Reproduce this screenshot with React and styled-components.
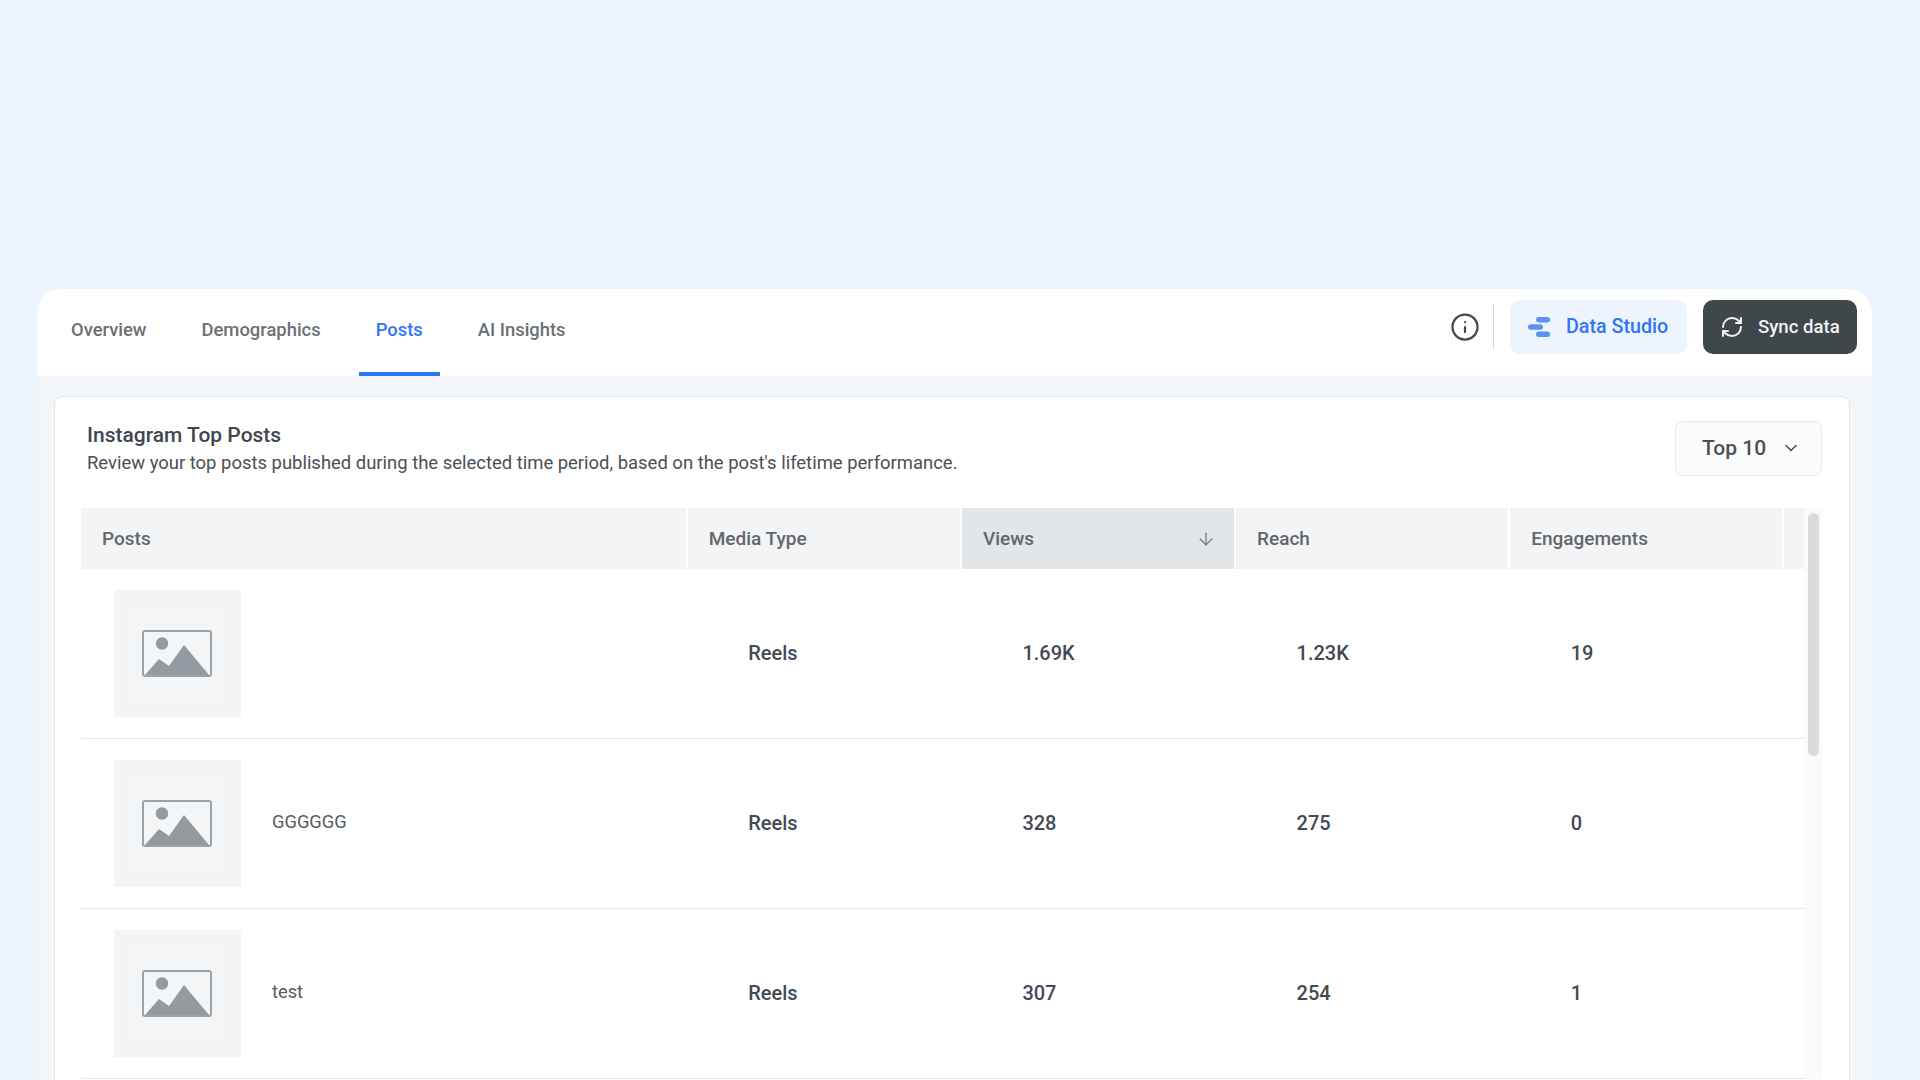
import React from 'react';
import styled, { createGlobalStyle } from 'styled-components';
import { ArrowDown, ChevronDown, Info, RefreshCw } from 'lucide-react';

const GlobalStyle = createGlobalStyle`
  html, body {
    margin: 0;
    height: 100%;
    overflow: hidden;
    background: #ecf4fe;
    font-family: Roboto, 'Liberation Sans', sans-serif;
  }
`;

const Page = styled.div`
  height: 1080px;
  padding: 289px 48px 0 37px;
  box-sizing: border-box;
  overflow: hidden;
`;

const Panel = styled.div`
  background: #f2f5f9;
  border-radius: 24px 24px 0 0;
  overflow: hidden;
  height: 100%;
`;

const TabBar = styled.div`
  height: 87px;
  background: #fff;
  display: flex;
  align-items: flex-start;
  justify-content: space-between;
  padding: 0 15px 0 17px;
`;

const Tabs = styled.div`
  display: flex;
  gap: 21px;
`;

const Tab = styled.div`
  height: 87px;
  box-sizing: border-box;
  padding: 29px 17px 0;
  font-size: 18.4px;
  line-height: 24px;
  font-weight: 500;
  color: ${p => (p.$active ? '#3174f6' : '#6b7074')};
  border-bottom: 4px solid ${p => (p.$active ? '#3174f6' : 'transparent')};
`;

const Actions = styled.div`
  display: flex;
  align-items: center;
  height: 55px;
  margin-top: 10px;
`;

const InfoButton = styled.div`
  display: flex;
  color: #43484c;
  margin-right: 13px;
`;

const Divider = styled.div`
  width: 1px;
  height: 44px;
  background: #d3d6d9;
  margin-right: 16px;
`;

const Button = styled.div`
  display: flex;
  align-items: center;
  height: 54px;
  box-sizing: border-box;
  border-radius: 10px;
  font-weight: 500;
`;

const StudioButton = styled(Button)`
  width: 177px;
  padding-left: 18px;
  gap: 14px;
  margin-right: 16px;
  background: #edf4fe;
  color: #3174f6;
  font-size: 19.7px;
`;

const SyncButton = styled(Button)`
  width: 154px;
  padding-left: 17px;
  gap: 14px;
  background: #3f474b;
  color: #f1f3f4;
  font-size: 18.6px;
`;

const Card = styled.div`
  margin: 20px 22px 0 17px;
  background: #fff;
  border: 1px solid #e4e7ea;
  border-bottom: none;
  border-radius: 8px 8px 0 0;
  padding: 24px 27px 0 26px;
  height: 800px;
`;

const CardHeader = styled.div`
  display: flex;
  justify-content: space-between;
  align-items: flex-start;
  padding-left: 6px;
`;

const Title = styled.h2`
  margin: 0;
  font-size: 21px;
  line-height: 28px;
  font-weight: 500;
  color: #3f4651;
`;

const Subtitle = styled.p`
  margin: 2px 0 0;
  font-size: 18.45px;
  line-height: 24px;
  color: #4a4f55;
`;

const TopSelect = styled.div`
  width: 147px;
  height: 55px;
  box-sizing: border-box;
  display: flex;
  align-items: center;
  justify-content: space-between;
  padding: 0 20px 1px 26px;
  background: #fbfbfb;
  border: 1px solid #e6e8ea;
  border-radius: 8px;
  font-size: 21px;
  font-weight: 500;
  color: #4a4f55;
`;

const TableWrap = styled.div`
  display: flex;
  margin-top: 32px;
`;

const TableMain = styled.div`
  flex: 1;
  min-width: 0;
`;

const columns = '604.5px repeat(4, 272px)';

const HeadRow = styled.div`
  display: grid;
  grid-template-columns: ${columns} minmax(0, 1fr);
  column-gap: 2.2px;
  height: 61px;
`;

const HeadCell = styled.div`
  display: flex;
  align-items: center;
  justify-content: space-between;
  padding: ${p => (p.$filler ? '0' : '0 18px 0 21px')};
  background: ${p => (p.$sorted ? '#e2e6e9' : '#f2f4f6')};
  font-size: 19px;
  font-weight: 500;
  color: #62676c;
`;

const Row = styled.div`
  display: grid;
  grid-template-columns: ${columns};
  column-gap: 2.2px;
  align-items: center;
  height: 170px;
  box-sizing: border-box;
  border-bottom: 1px solid #e2e8ee;
`;

const PostCell = styled.div`
  display: flex;
  align-items: center;
  gap: 31.5px;
  padding-left: 33px;
`;

const Thumb = styled.div`
  width: 126.5px;
  height: 127px;
  background: #f3f4f6;
  display: flex;
  align-items: center;
  justify-content: center;
  flex-shrink: 0;
`;

const ThumbInner = styled.div`
  width: 90px;
  height: 90px;
  background: #f4f5f7;
  display: flex;
  align-items: center;
  justify-content: center;
`;

const Caption = styled.span`
  font-size: 18.3px;
  line-height: 24px;
  margin-top: -3px;
  color: #575c62;
`;

const ValueCell = styled.div`
  padding: 0 0 1px 60.5px;
  font-size: 20px;
  font-weight: 500;
  color: #434a55;
`;

const ScrollTrack = styled.div`
  width: 18px;
  position: relative;
  flex-shrink: 0;
  background: #fafafa;
`;

const ScrollThumb = styled.div`
  position: absolute;
  top: 5px;
  left: 4px;
  width: 11px;
  height: 243px;
  border-radius: 5.5px;
  background: #d9dbdd;
`;

const DataStudioIcon = () => (
  <svg width="24" height="20" viewBox="0 0 24 20" fill="#5b93f2">
    <rect x="8" y="0" width="14" height="5.5" rx="2.75" />
    <rect x="0" y="7.2" width="15" height="5.5" rx="2.75" />
    <rect x="8" y="14.5" width="14" height="5.5" rx="2.75" />
  </svg>
);

const PlaceholderIcon = () => (
  <svg width="70" height="47" viewBox="0 0 70 47">
    <rect x="1" y="1" width="68" height="45" rx="2" fill="none" stroke="#9ba2a8" strokeWidth="2" />
    <circle cx="20" cy="13.5" r="6.2" fill="#939aa0" />
    <path d="M3 45 L17 29 L27 36 L42 15 L67 45 Z" fill="#939aa0" />
  </svg>
);

const rows = [
  { caption: '', views: '1.69K', reach: '1.23K', engagements: '19' },
  { caption: 'GGGGGG', views: '328', reach: '275', engagements: '0' },
  { caption: 'test', views: '307', reach: '254', engagements: '1' },
];

export default function App() {
  return (
    <Page>
      <GlobalStyle />
      <Panel>
        <TabBar>
          <Tabs>
            <Tab>Overview</Tab>
            <Tab>Demographics</Tab>
            <Tab $active>Posts</Tab>
            <Tab>AI Insights</Tab>
          </Tabs>
          <Actions>
            <InfoButton><Info size={30} strokeWidth={1.8} /></InfoButton>
            <Divider />
            <StudioButton><DataStudioIcon />Data Studio</StudioButton>
            <SyncButton><RefreshCw size={24} strokeWidth={2} />Sync data</SyncButton>
          </Actions>
        </TabBar>
        <Card>
          <CardHeader>
            <div>
              <Title>Instagram Top Posts</Title>
              <Subtitle>Review your top posts published during the selected time period, based on the post's lifetime performance.</Subtitle>
            </div>
            <TopSelect>Top 10<ChevronDown size={20} strokeWidth={1.8} /></TopSelect>
          </CardHeader>
          <TableWrap>
            <TableMain>
              <HeadRow>
                <HeadCell>Posts</HeadCell>
                <HeadCell>Media Type</HeadCell>
                <HeadCell $sorted>Views<ArrowDown size={20} strokeWidth={1.5} color="#6f767d" /></HeadCell>
                <HeadCell>Reach</HeadCell>
                <HeadCell>Engagements</HeadCell>
                <HeadCell $filler />
              </HeadRow>
              {rows.map((row, i) => (
                <Row key={i}>
                  <PostCell>
                    <Thumb><ThumbInner><PlaceholderIcon /></ThumbInner></Thumb>
                    <Caption>{row.caption}</Caption>
                  </PostCell>
                  <ValueCell>Reels</ValueCell>
                  <ValueCell>{row.views}</ValueCell>
                  <ValueCell>{row.reach}</ValueCell>
                  <ValueCell>{row.engagements}</ValueCell>
                </Row>
              ))}
            </TableMain>
            <ScrollTrack><ScrollThumb /></ScrollTrack>
          </TableWrap>
        </Card>
      </Panel>
    </Page>
  );
}
